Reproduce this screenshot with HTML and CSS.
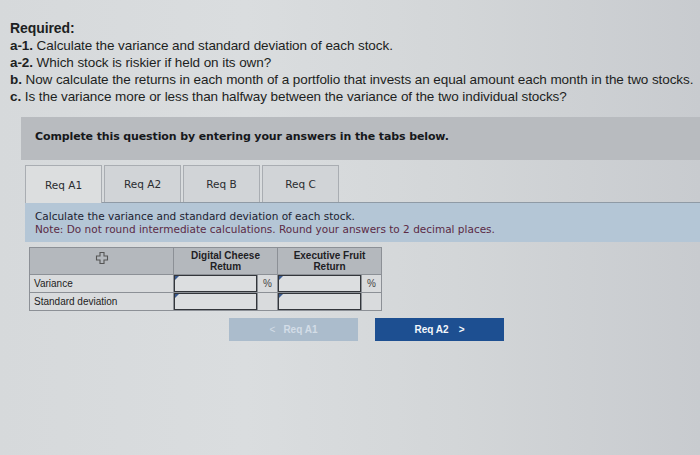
FILE: index.html
```html
<!DOCTYPE html>
<html>
<head>
<meta charset="utf-8">
<link rel="stylesheet" href="styles.css">
</head>
<body>
<div class="page">
  <div class="required">
    <div class="req-title">Required:</div>
    <div><b>a-1.</b> Calculate the variance and standard deviation of each stock.</div>
    <div><b>a-2.</b> Which stock is riskier if held on its own?</div>
    <div><b>b.</b> Now calculate the returns in each month of a portfolio that invests an equal amount each month in the two stocks.</div>
    <div><b>c.</b> Is the variance more or less than halfway between the variance of the two individual stocks?</div>
  </div>
  <div class="panel">
    <div class="banner">Complete this question by entering your answers in the tabs below.</div>
    <div class="tabs">
      <div class="tab active">Req A1</div>
      <div class="tab">Req A2</div>
      <div class="tab">Req B</div>
      <div class="tab">Req C</div>
    </div>
    <div class="instr">
      <div>Calculate the variance and standard deviation of each stock.</div>
      <div class="note">Note: Do not round intermediate calculations. Round your answers to 2 decimal places.</div>
    </div>
    <table class="grid">
      <tr class="head">
        <th class="c1">
          <svg class="plus" width="14" height="14" viewBox="0 0 14 14"><path d="M5 1.5h4v3.5h3.5v4H9v3.5H5V9H1.5V5H5z" fill="none" stroke="#555" stroke-width="1.1"/></svg>
        </th>
        <th colspan="2">Digital Cheese<br>Retum</th>
        <th colspan="2">Executive Fruit<br>Return</th>
      </tr>
      <tr>
        <td class="lbl">Variance</td>
        <td class="in"><div class="field"></div></td>
        <td class="pct">%</td>
        <td class="in"><div class="field"></div></td>
        <td class="pct">%</td>
      </tr>
      <tr>
        <td class="lbl">Standard deviation</td>
        <td class="in"><div class="field"></div></td>
        <td class="pct"></td>
        <td class="in"><div class="field"></div></td>
        <td class="pct"></td>
      </tr>
    </table>
    <div class="nav">
      <div class="btn prev"><span class="chev">&lt;</span> Req A1</div>
      <div class="btn next">Req A2 <span class="chev">&gt;</span></div>
    </div>
  </div>
</div>
</body>
</html>
```
FILE: styles.css
```css
html, body {
  margin: 0;
  padding: 0;
}
body {
  width: 700px;
  height: 455px;
  overflow: hidden;
  background: linear-gradient(90deg, #d6d9db 0%, #dadddf 35%, #d3d6d8 65%, #c8cbcf 100%);
  font-family: "Liberation Sans", Arial, sans-serif;
  color: #1d1f22;
}
.required {
  padding: 20px 0 0 10px;
  font-size: 13.5px;
  line-height: 17px;
  letter-spacing: -0.08px;
  white-space: nowrap;
}
.req-title {
  font-weight: bold;
  font-size: 14px;
}
.required b {
  font-weight: bold;
}
.panel {
  margin: 12px 0 0 21px;
}
.banner {
  background: #b8bbbf;
  height: 43px;
  box-sizing: border-box;
  padding: 13px 0 0 14px;
  font-family: "DejaVu Sans", Verdana, sans-serif;
  font-weight: bold;
  font-size: 11px;
  letter-spacing: -0.12px;
  color: #16181b;
}
.tabs {
  display: flex;
  gap: 2px;
  margin: 5px 0 0 4px;
}
.tab {
  width: 77px;
  height: 37px;
  box-sizing: border-box;
  border: 1px solid #a9adb2;
  border-bottom: none;
  background: #d1d4d7;
  display: flex;
  align-items: center;
  justify-content: center;
  font-family: "DejaVu Sans", Verdana, sans-serif;
  font-size: 10.5px;
  color: #2a2c30;
}
.tab.active {
  background: #dcdedf;
  height: 38px;
  margin-bottom: -1px;
  position: relative;
}
.instr {
  margin-left: 4px;
  background: #b4c6d6;
  border-top: 1px solid #8f9aa5;
  height: 40px;
  box-sizing: border-box;
  padding: 7px 0 0 10px;
  font-family: "DejaVu Sans", Verdana, sans-serif;
  font-size: 10.5px;
  line-height: 13px;
  color: #1c2230;
}
.note {
  color: #5b2a45;
}
.grid {
  margin: 5px 0 0 8px;
  border-collapse: collapse;
  font-family: "Liberation Sans", Arial, sans-serif;
  font-size: 10px;
  color: #222;
}
.grid th, .grid td {
  border: 1px solid #8c9096;
  padding: 0;
}
.grid .head th {
  background: #b4b8bd;
  height: 26px;
  font-weight: bold;
  font-size: 10px;
  line-height: 11px;
  color: #1e2024;
  vertical-align: middle;
}
.grid th.c1 {
  width: 143px;
}
.plus {
  display: block;
  margin: 0 auto 6px;
}
.grid td {
  background: #d9dbdd;
  height: 17px;
}
.grid td.lbl {
  padding-left: 4px;
  text-align: left;
}
.grid td.in {
  width: 83px;
  padding: 0;
}
.field {
  height: 17px;
  margin: 0;
  border: 1.5px solid #33363b;
  box-sizing: border-box;
  background: #dcdee0;
  position: relative;
}
.field::before {
  content: "";
  position: absolute;
  left: 0;
  top: 0;
  border-top: 4px solid #3b5b8f;
  border-right: 4px solid transparent;
}
.grid td.pct {
  width: 19px;
  text-align: center;
  color: #444;
}
.nav {
  display: flex;
  gap: 17px;
  margin: 7px 0 0 208px;
}
.btn {
  width: 129px;
  height: 23px;
  display: flex;
  align-items: center;
  justify-content: center;
  font-family: "Liberation Sans", Arial, sans-serif;
  font-weight: bold;
  font-size: 10px;
}
.btn.prev {
  background: #abbccc;
  color: #d3dde7;
}
.btn.prev .chev {
  margin-right: 8px;
  font-weight: normal;
}
.btn.next {
  background: #1d4f91;
  color: #f4f7fb;
}
.btn.next .chev {
  margin-left: 10px;
}
```
